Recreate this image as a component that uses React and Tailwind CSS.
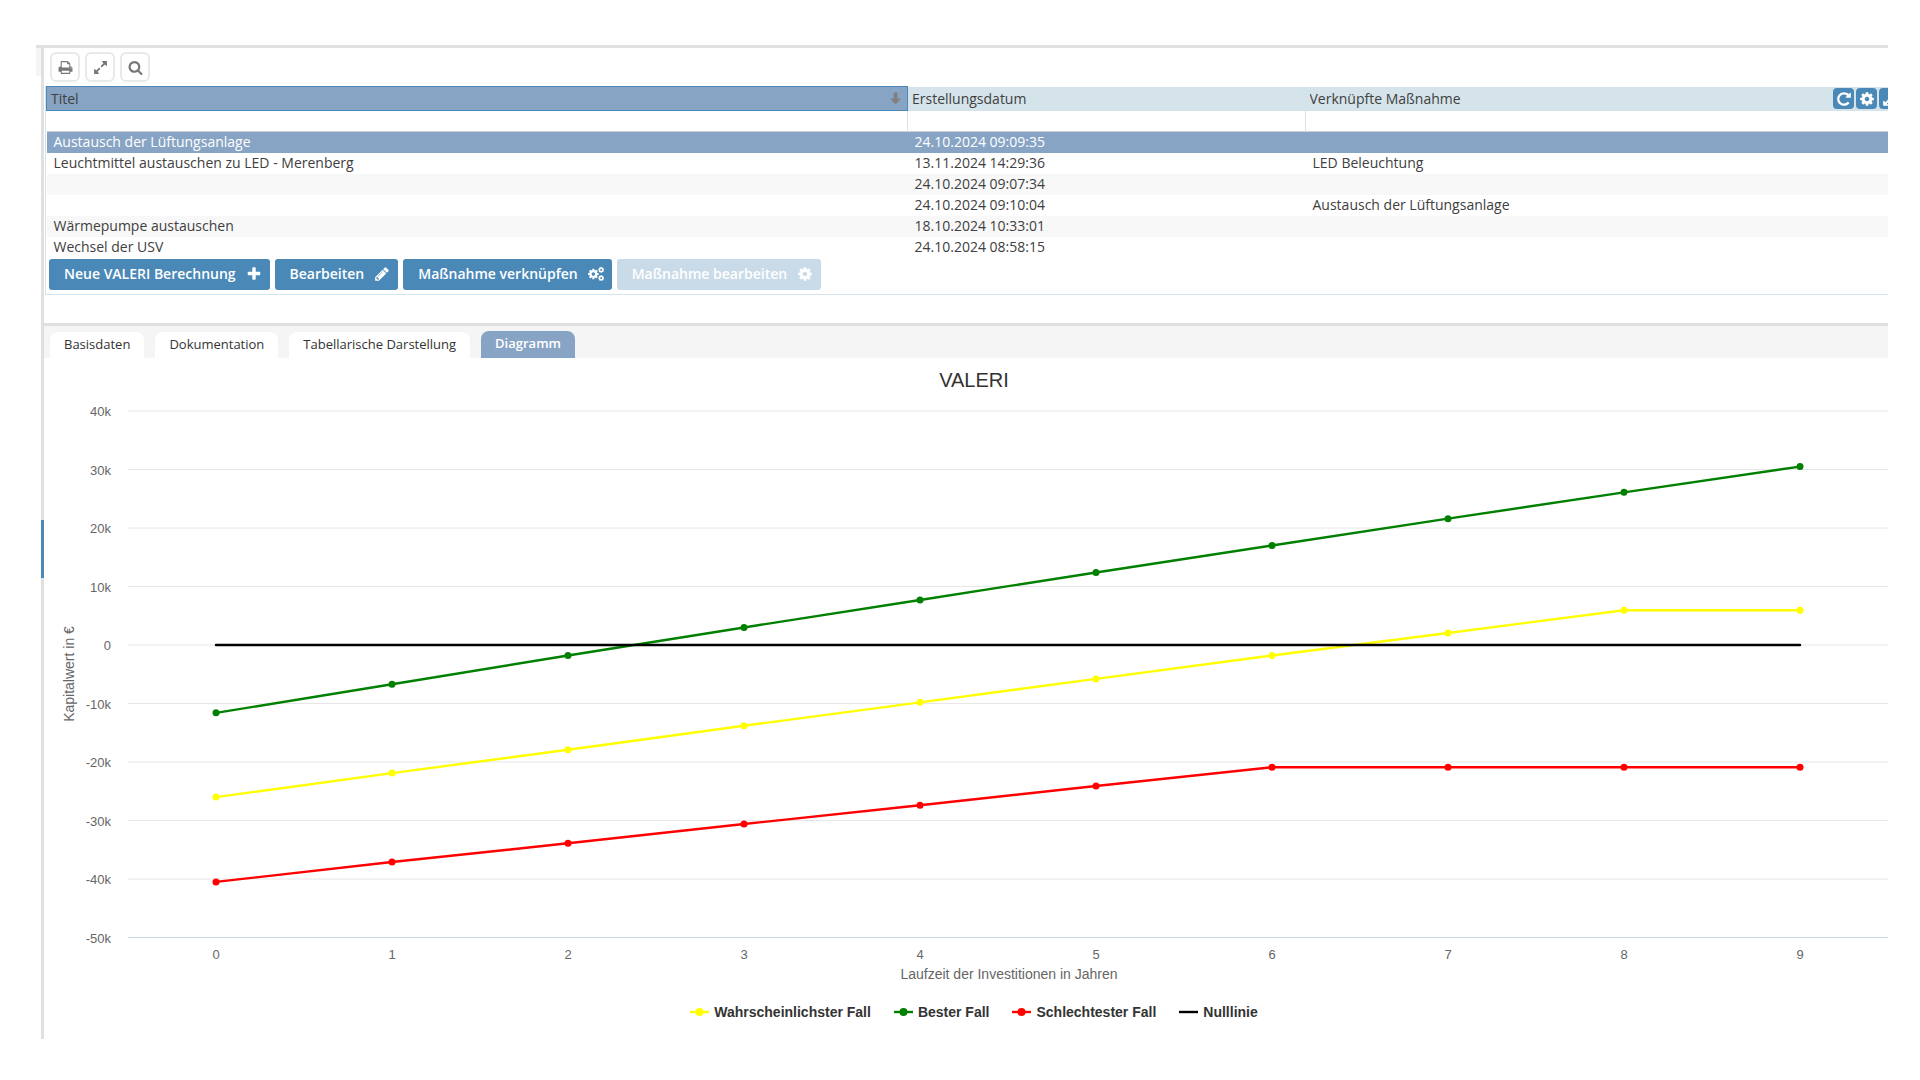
import { useState } from "react";

const rows = [
  { title: "Austausch der Lüftungsanlage", date: "24.10.2024 09:09:35", linked: "" },
  { title: "Leuchtmittel austauschen zu LED - Merenberg", date: "13.11.2024 14:29:36", linked: "LED Beleuchtung" },
  { title: "", date: "24.10.2024 09:07:34", linked: "" },
  { title: "", date: "24.10.2024 09:10:04", linked: "Austausch der Lüftungsanlage" },
  { title: "Wärmepumpe austauschen", date: "18.10.2024 10:33:01", linked: "" },
  { title: "Wechsel der USV", date: "24.10.2024 08:58:15", linked: "" },
];

const tabs = ["Basisdaten", "Dokumentation", "Tabellarische Darstellung", "Diagramm"];

// values in thousand euros, one per year
const series = [
  {
    name: "Wahrscheinlichster Fall",
    color: "#ffff00",
    markers: true,
    data: [-26, -21.9, -17.9, -13.8, -9.8, -5.8, -1.8, 2.05, 5.95, 5.95],
  },
  {
    name: "Bester Fall",
    color: "#008000",
    markers: true,
    data: [-11.6, -6.7, -1.8, 3, 7.7, 12.4, 17, 21.6, 26.1, 30.5],
  },
  {
    name: "Schlechtester Fall",
    color: "#ff0000",
    markers: true,
    data: [-40.5, -37.1, -33.9, -30.6, -27.4, -24.1, -20.9, -20.9, -20.9, -20.9],
  },
  {
    name: "Nulllinie",
    color: "#000000",
    markers: false,
    data: [0, 0, 0, 0, 0, 0, 0, 0, 0, 0],
  },
];

const icons = {
  print:
    "M448 1536h896v-256h-896v256zm0-640h896v-384h-160q-40 0-68-28t-28-68v-160h-640v640zm1152 64q0-26-19-45t-45-19-45 19-19 45 19 45 45 19 45-19 19-45zm128 0v416q0 13-9.5 22.5t-22.5 9.5h-224v160q0 40-28 68t-68 28h-960q-40 0-68-28t-28-68v-160h-224q-13 0-22.5-9.5t-9.5-22.5v-416q0-79 56.5-135.5t135.5-56.5h64v-544q0-40 28-68t68-28h672q40 0 88 20t76 48l152 152q28 28 48 76t20 88v256h64q79 0 135.5 56.5t56.5 135.5z",
  expand:
    "M883 1056q0 13-10 23l-332 332 144 144q19 19 19 45t-19 45-45 19h-448q-26 0-45-19t-19-45v-448q0-26 19-45t45-19 45 19l144 144 332-332q10-10 23-10t23 10l114 114q10 10 10 23zm781-864v448q0 26-19 45t-45 19-45-19l-144-144-332 332q-10 10-23 10t-23-10l-114-114q-10-10-10-23t10-23l332-332-144-144q-19-19-19-45t19-45 45-19h448q26 0 45 19t19 45z",
  search:
    "M1216 832q0-185-131.5-316.5t-316.5-131.5-316.5 131.5-131.5 316.5 131.5 316.5 316.5 131.5 316.5-131.5 131.5-316.5zm512 832q0 52-38 90t-90 38q-54 0-90-38l-343-342q-179 124-399 124-143 0-273.5-55.5t-225-150-150-225-55.5-273.5 55.5-273.5 150-225 225-150 273.5-55.5 273.5 55.5 225 150 150 225 55.5 273.5q0 220-124 399l343 343q37 37 37 90z",
  arrowDown: "M672 192h448v704h416l-640 704-640-704h416z",
  repeat:
    "M1664 256v448q0 26-19 45t-45 19h-448q-42 0-59-40-17-39 14-69l138-138q-148-137-349-137-104 0-198.5 40.5t-163.5 109.5-109.5 163.5-40.5 198.5 40.5 198.5 109.5 163.5 163.5 109.5 198.5 40.5q119 0 225-52t179-147q7-10 23-12 15 0 25 9l137 138q9 8 9.5 20.5t-7.5 22.5q-109 132-264 204.5t-327 72.5q-156 0-298-61t-245-164-164-245-61-298 61-298 164-245 245-164 298-61q147 0 284.5 55.5t244.5 156.5l130-129q29-31 70-14 39 17 39 59z",
  plus: "M1600 736v192q0 40-28 68t-68 28h-416v416q0 40-28 68t-68 28h-192q-40 0-68-28t-28-68v-416h-416q-40 0-68-28t-28-68v-192q0-40 28-68t68-28h416v-416q0-40 28-68t68-28h192q40 0 68 28t28 68v416h416q40 0 68 28t28 68z",
  pencil:
    "M491 1536l91-91-235-235-91 91v107h128v128h107zm523-928q0-22-22-22-10 0-17 7l-542 542q-7 7-7 17 0 22 22 22 10 0 17-7l542-542q7-7 7-17zm-54-192l416 416-832 832h-416v-416zm683 96q0 53-37 90l-166 166-416-416 166-165q36-38 90-38 53 0 91 38l235 234q37 39 37 91z",
  cog: "M1152 896q0-106-75-181t-181-75-181 75-75 181 75 181 181 75 181-75 75-181zm512-109v222q0 12-8 23t-20 13l-185 28q-19 54-39 91 35 50 107 138 10 12 10 25t-9 23q-27 37-99 108t-94 71q-12 0-26-9l-138-108q-44 23-91 38-16 136-29 186-7 28-36 28h-222q-14 0-24.5-8.5t-11.5-21.5l-28-184q-49-16-90-37l-141 107q-10 9-25 9-14 0-25-11-126-114-165-168-7-10-7-23 0-12 8-23 15-21 51-66.5t54-70.5q-27-50-41-99l-183-27q-13-2-21-12.5t-8-23.5v-222q0-12 8-23t19-13l186-28q14-46 39-92-40-57-107-138-10-12-10-24 0-10 9-23 26-36 98.5-107.5t94.5-71.5q13 0 26 10l138 107q44-23 91-38 16-136 29-186 7-28 36-28h222q14 0 24.5 8.5t11.5 21.5l28 184q49 16 90 37l142-107q9-9 24-9 13 0 25 10 129 119 165 170 7 8 7 22 0 12-8 23-15 21-51 66.5t-54 70.5q26 50 41 98l183 28q13 2 21 12.5t8 23.5z",
};

const Icon = ({ name, className }) => (
  <svg viewBox="0 0 1792 1792" fill="currentColor" className={className} aria-hidden="true">
    <path d={icons[name]} />
  </svg>
);

// one large gear with two small ones on its right
const CogsIcon = ({ className }) => (
  <svg viewBox="0 0 1792 1792" fill="currentColor" className={className} aria-hidden="true">
    <path transform="translate(-80 220) scale(0.76)" d={icons.cog} />
    <path transform="translate(1080 40) scale(0.44)" d={icons.cog} />
    <path transform="translate(1080 960) scale(0.44)" d={icons.cog} />
  </svg>
);

const ToolButton = ({ label, icon }) => (
  <button
    type="button"
    aria-label={label}
    className="flex size-[30px] items-center justify-center rounded-md border-2 border-[#e9e9e9] bg-white text-[#777]"
  >
    <Icon name={icon} className="size-[15px]" />
  </button>
);

const HeaderButton = ({ label, icon }) => (
  <button
    type="button"
    aria-label={label}
    className="flex size-[21px] shrink-0 items-center justify-center rounded bg-[#4a89b7] text-white"
  >
    <Icon name={icon} className="size-4" />
  </button>
);

const ActionButton = ({ icon, disabled, children }) => (
  <button
    type="button"
    disabled={disabled}
    className="flex h-[31px] items-center gap-[10px] rounded-[3px] bg-[#4a89b7] pr-2 pl-[15px] text-sm font-semibold text-white disabled:bg-[#c9dbe9]"
  >
    {children}
    {icon}
  </button>
);

const MeasureTable = ({ selected, onSelect }) => (
  <table className="w-full table-fixed border-collapse text-left text-sm leading-5 text-[#404040]">
    <colgroup>
      <col className="w-[861px]" />
      <col className="w-[398px]" />
      <col />
    </colgroup>
    <thead>
      <tr className="h-6 bg-[#d5e3ea]">
        <th className="border border-[#4a89b7] bg-[#88a4c4] p-0 font-normal">
          <div className="flex items-center justify-between pr-1 pl-1">
            Titel
            <Icon name="arrowDown" className="size-[15px] text-[#808080]" />
          </div>
        </th>
        <th className="p-0 pl-1 font-normal">Erstellungsdatum</th>
        <th className="p-0 pl-1 font-normal">
          <div className="flex items-center justify-between overflow-hidden">
            Verknüpfte Maßnahme
            <div className="-mr-3 flex gap-[2px]">
              <HeaderButton label="Aktualisieren" icon="repeat" />
              <HeaderButton label="Einstellungen" icon="cog" />
              <HeaderButton label="Vergrößern" icon="expand" />
            </div>
          </div>
        </th>
      </tr>
      <tr className="h-[21px] border-b border-[#c8d0d4]">
        <td className="border-r border-[#e0e0e0] p-0" />
        <td className="border-r border-[#e0e0e0] p-0" />
        <td className="p-0" />
      </tr>
    </thead>
    <tbody>
      {rows.map((row, i) => (
        <tr
          key={row.date}
          onClick={() => onSelect(i)}
          className={
            i === selected ? "h-[21px] bg-[#88a4c4] text-white" : "h-[21px] even:bg-white odd:bg-[#f8f8f8]"
          }
        >
          <td className="p-0 pl-[7px]">{row.title}</td>
          <td className="p-0 pl-[7px]">{row.date}</td>
          <td className="p-0 pl-[7px]">{row.linked}</td>
        </tr>
      ))}
    </tbody>
  </table>
);

const LineChart = () => {
  const left = 84;
  const step = 176;
  const zero = 251;
  const perK = 5.85;
  const x = (i) => left + step / 2 + i * step;
  const y = (v) => zero - v * perK;
  const ticks = [40, 30, 20, 10, 0, -10, -20, -30, -40, -50];

  return (
    <svg viewBox="0 0 1860 602" className="block w-full" role="img" aria-label="VALERI">
      {ticks.map((t) => (
        <g key={t}>
          <line
            x1={left}
            x2={left + step * 10}
            y1={y(t)}
            y2={y(t)}
            stroke={t === -50 ? "#ccd6eb" : "#e6e6e6"}
          />
          <text x="67" y={y(t) + 5} textAnchor="end" fontSize="13" fill="#666">
            {t === 0 ? "0" : `${t}k`}
          </text>
        </g>
      ))}
      {series[0].data.map((_, i) => (
        <text key={i} x={x(i)} y="565" textAnchor="middle" fontSize="13" fill="#666">
          {i}
        </text>
      ))}
      <text x="965" y="585" textAnchor="middle" fontSize="14" fill="#666">
        Laufzeit der Investitionen in Jahren
      </text>
      <text transform="translate(30 280) rotate(-90)" textAnchor="middle" fontSize="14" fill="#666">
        Kapitalwert in €
      </text>
      {series.map((s) => (
        <g key={s.name} fill={s.color} stroke={s.color}>
          <polyline
            points={s.data.map((v, i) => `${x(i)},${y(v)}`).join(" ")}
            fill="none"
            strokeWidth="2.4"
            strokeLinejoin="round"
            strokeLinecap="round"
          />
          {s.markers && s.data.map((v, i) => <circle key={i} cx={x(i)} cy={y(v)} r="3.5" stroke="none" />)}
        </g>
      ))}
    </svg>
  );
};

const Legend = () => (
  <div className="flex justify-center gap-[23px] text-sm font-bold text-[#333]">
    {series.map((s) => (
      <button key={s.name} type="button" className="flex items-center gap-[5px]">
        <svg viewBox="0 0 19 10" className="h-[10px] w-[19px]" aria-hidden="true">
          <line x1="0" x2="19" y1="5" y2="5" stroke={s.color} strokeWidth="2.4" />
          {s.markers && <circle cx="9.5" cy="5" r="4" fill={s.color} />}
        </svg>
        {s.name}
      </button>
    ))}
  </div>
);

export default function App() {
  const [selected, setSelected] = useState(0);
  const [activeTab, setActiveTab] = useState("Diagramm");

  return (
    <div className="min-h-screen bg-white pt-[45px] pr-8 pb-[42px] pl-9 font-['Open_Sans',sans-serif]">
      <div className="flex border-t-[3px] border-[#e0e0e0]">
        {/* Edge of the collapsed sidebar */}
        <div className="h-7 w-[5px] shrink-0 bg-[#f5f5f5]" />

        {/* Splitter with its drag handle */}
        <div className="flex w-[3px] shrink-0 flex-col items-center justify-center bg-[#e0e0e0] pt-3">
          <div className="h-[58px] w-full bg-[#4a89b7]" />
        </div>

        <main className="min-w-0 flex-1 overflow-hidden">
          <div className="flex gap-[5px] pt-1 pb-1 pl-[6px]">
            <ToolButton label="Drucken" icon="print" />
            <ToolButton label="Vollbild" icon="expand" />
            <ToolButton label="Suchen" icon="search" />
          </div>

          <section className="ml-px border-b border-l border-[#d5e3ea] pb-1">
            <MeasureTable selected={selected} onSelect={setSelected} />
            <div className="flex gap-[5px] pt-px pl-[3px]">
              <ActionButton icon={<Icon name="plus" className="size-4" />}>Neue VALERI Berechnung</ActionButton>
              <ActionButton icon={<Icon name="pencil" className="size-4" />}>Bearbeiten</ActionButton>
              <ActionButton icon={<CogsIcon className="size-4" />}>Maßnahme verknüpfen</ActionButton>
              <ActionButton icon={<Icon name="cog" className="size-4" />} disabled>
                Maßnahme bearbeiten
              </ActionButton>
            </div>
          </section>

          <nav className="mt-7 flex items-end gap-[11px] border-t-[3px] border-[#e0e0e0] bg-[#f5f5f5] pt-[5px] pl-[6px]">
            {tabs.map((tab) => (
              <button
                key={tab}
                type="button"
                onClick={() => setActiveTab(tab)}
                className={
                  tab === activeTab
                    ? "h-[27px] rounded-t-lg bg-[#88a4c4] px-[14px] text-[13px] font-semibold text-white"
                    : "h-[26px] rounded-t-lg bg-white px-[14px] text-[13px] text-[#333]"
                }
              >
                {tab}
              </button>
            ))}
          </nav>

          <div className="-mr-4 pt-2 pb-[17px] font-['Liberation_Sans',sans-serif]">
            <h2 className="text-center text-xl leading-7 text-[#333]">VALERI</h2>
            <LineChart />
            <div className="pt-[6px]">
              <Legend />
            </div>
          </div>
        </main>
      </div>
    </div>
  );
}
